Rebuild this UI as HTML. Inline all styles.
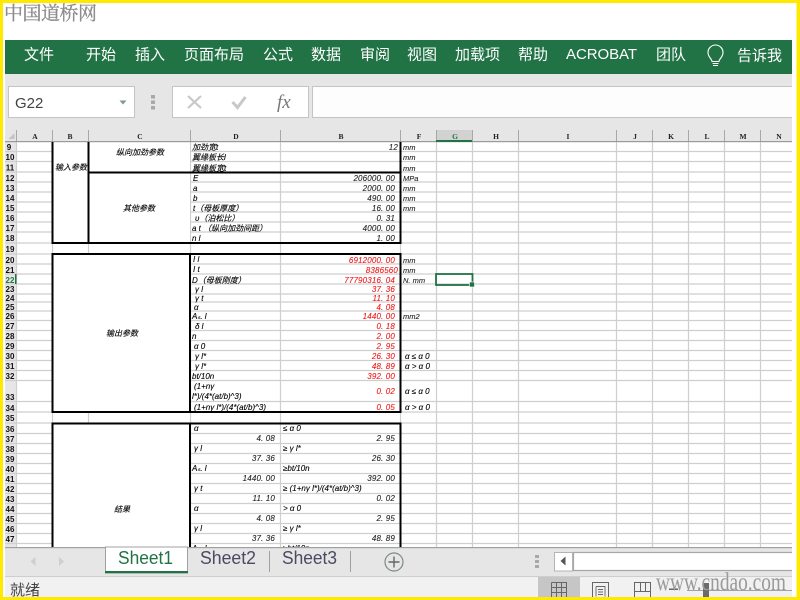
<!DOCTYPE html>
<html lang="zh"><head><meta charset="utf-8"><title>Sheet</title>
<style>
html,body{margin:0;padding:0;width:800px;height:600px;overflow:hidden;background:#fff}
svg{display:block;position:absolute;left:0;top:0}
text{font-family:"Liberation Sans","Noto Sans CJK SC",sans-serif}
.r{font-size:15px;fill:#fff;font-family:"Liberation Sans","Noto Sans CJK SC",sans-serif}
.t{font-size:8px;font-style:italic;fill:#000;stroke:#000;stroke-width:.12px;font-family:"Liberation Sans","Noto Sans CJK SC",sans-serif}
.v{font-size:8px;font-style:italic;fill:#222;stroke:#222;stroke-width:.1px;text-anchor:end;letter-spacing:.15px}
.o{fill:#f01818;stroke:#f01818}
.n{font-size:8px;font-weight:bold;fill:#111;text-anchor:middle;font-family:"Liberation Sans",sans-serif}
.c{font-size:7.5px;font-weight:bold;fill:#222;text-anchor:middle;font-family:"Liberation Serif",serif}
.u{font-size:7.5px;font-style:italic;fill:#222;stroke:#222;stroke-width:.1px}
.b{filter:blur(.3px)}
</style></head><body>
<svg width="800" height="600" viewBox="0 0 800 600">
<rect width="800" height="600" fill="#fff"/>
<!-- logo -->
<text x="4" y="19.500" style="font-family:'Noto Serif CJK SC',serif;font-size:19px;fill:#8c8c8c;stroke:#8c8c8c;stroke-width:.3px;filter:blur(.3px)" textLength="93" lengthAdjust="spacing">中国道桥网</text>
<!-- ribbon -->
<rect x="5" y="40" width="787" height="34" fill="#217346"/>
<g class="r">
<text class="r" x="24" y="59.500">文件</text><text class="r" x="86" y="59.500">开始</text><text class="r" x="135" y="59.500">插入</text>
<text class="r" x="184" y="59.500">页面布局</text><text class="r" x="263" y="59.500">公式</text><text class="r" x="311" y="59.500">数据</text>
<text class="r" x="360" y="59.500">审阅</text><text class="r" x="407" y="59.500">视图</text><text class="r" x="455" y="59.500">加载项</text>
<text class="r" x="518" y="59.500">帮助</text><text class="r" x="566" y="59" textLength="71">ACROBAT</text><text class="r" x="656" y="59.500">团队</text>
<text class="r" x="737" y="60.500">告诉我</text></g>
<path d="M712 61.500c0-3-4-4-4-9a7.500 7.500 0 0 1 15 0c0 5-4 6-4 9zM712.500 63.500h6M713 65.500h5" fill="none" stroke="#fff" stroke-width="1.100"/>
<!-- formula band -->
<rect x="5" y="74" width="787" height="68" fill="#e6e6e6"/>
<rect x="8.500" y="86.500" width="126" height="31" fill="#fff" stroke="#c4c4c4"/>
<text x="15" y="108" style="font-size:15px;fill:#444">G22</text>
<path d="M119.500 100.500h7l-3.500 4z" fill="#7f9a8c"/>
<rect x="151" y="95" width="4" height="3.500" fill="#a8a8a8"/><rect x="151" y="100.500" width="4" height="3.500" fill="#a8a8a8"/><rect x="151" y="106" width="4" height="3.500" fill="#a8a8a8"/>
<rect x="172.500" y="86.500" width="136" height="31" fill="#fff" stroke="#c4c4c4"/>
<path d="M188 96l13 12M201 96l-13 12" stroke="#c8c8c8" stroke-width="2.200" fill="none"/>
<path d="M232.500 102l5 5.500 8-10.500" stroke="#c8c8c8" stroke-width="3" fill="none"/>
<text x="277" y="108" style="font-family:'Liberation Serif',serif;font-style:italic;font-size:19px;fill:#777">fx</text>
<rect x="312.500" y="86.500" width="484" height="31" fill="#fdfdfd" stroke="#c4c4c4"/>
<!-- grid background -->
<rect x="16" y="142" width="776" height="406" fill="#fff"/>
<rect x="5" y="142" width="11" height="406" fill="#e6e6e6"/>
<rect x="436" y="130" width="36" height="11" fill="#d2d2d2"/>
<!-- grid -->
<g stroke="#cfcfcf" stroke-width="1.200">
<path d="M16.500 142V548M52.500 142V548M88.500 142V548M190.500 142V548M280.500 142V548M400.500 142V548M436.500 142V548M472.500 142V548M518.500 142V548M616.500 142V548M652.500 142V548M688.500 142V548M724.500 142V548M760.500 142V548"/>
<path d="M5 151.500H792M5 161.500H792M5 172H792M5 182H792M5 192H792M5 202H792M5 212H792M5 222H792M5 232H792M5 243H792M5 254H792M5 264H792M5 274H792M5 284H792M5 294H792M5 302H792M5 311H792M5 320.500H792M5 330.500H792M5 340.500H792M5 350.500H792M5 360.500H792M5 370.500H792M5 380.500H792M5 401.500H792M5 412H792M5 423H792M5 433.500H792M5 443.500H792M5 453.500H792M5 463.500H792M5 473.500H792M5 483.500H792M5 493.500H792M5 503.500H792M5 513.500H792M5 523.500H792M5 533.500H792M5 543.500H792"/>
</g>
<!-- white merges -->
<rect x="53" y="142" width="35" height="100" fill="#fff"/>
<rect x="89" y="142" width="101" height="30" fill="#fff"/>
<rect x="89" y="173" width="101" height="69" fill="#fff"/>
<rect x="53" y="254" width="137" height="158" fill="#fff"/>
<rect x="53" y="424" width="137" height="124" fill="#fff"/>
<!-- column header -->
<g stroke="#a8a8a8"><path d="M16.500 130V141M52.500 130V141M88.500 130V141M190.500 130V141M280.500 130V141M400.500 130V141M436.500 130V141M472.500 130V141M518.500 130V141M616.500 130V141M652.500 130V141M688.500 130V141M724.500 130V141M760.500 130V141"/></g>
<rect x="5" y="141" width="787" height="1.200" fill="#9a9a9a"/>
<rect x="436" y="140" width="36" height="2" fill="#217346"/>
<path d="M14.500 133v6h-6z" fill="#c4c4c4"/>
<rect x="15" y="274" width="1.500" height="10" fill="#217346"/>
<g class="b">
<text class="c" x="35" y="139">A</text><text class="c" x="70" y="139">B</text><text class="c" x="140" y="139">C</text><text class="c" x="236" y="139">D</text><text class="c" x="341" y="139">B</text><text class="c" x="419" y="139">F</text><text class="c" x="455" y="139" style="fill:#217346">G</text><text class="c" x="496" y="139">H</text><text class="c" x="568" y="139">I</text><text class="c" x="635" y="139">J</text><text class="c" x="671" y="139">K</text><text class="c" x="707" y="139">L</text><text class="c" x="743" y="139">M</text><text class="c" x="779" y="139">N</text>
<!-- row numbers -->
<text class="n" x="9" y="150">9</text><text class="n" x="10" y="160">10</text><text class="n" x="10" y="170.500">11</text><text class="n" x="10" y="181">12</text><text class="n" x="10" y="191">13</text><text class="n" x="10" y="201">14</text><text class="n" x="10" y="211">15</text><text class="n" x="10" y="221">16</text><text class="n" x="10" y="231">17</text><text class="n" x="10" y="241">18</text><text class="n" x="10" y="252">19</text><text class="n" x="10" y="263">20</text><text class="n" x="10" y="273">21</text><text class="n" x="10" y="283" style="fill:#217346">22</text><text class="n" x="10" y="292">23</text><text class="n" x="10" y="301">24</text><text class="n" x="10" y="310">25</text><text class="n" x="10" y="319">26</text><text class="n" x="10" y="329">27</text><text class="n" x="10" y="339">28</text><text class="n" x="10" y="349">29</text><text class="n" x="10" y="359">30</text><text class="n" x="10" y="369">31</text><text class="n" x="10" y="379">32</text><text class="n" x="10" y="400">33</text><text class="n" x="10" y="411">34</text><text class="n" x="10" y="421">35</text><text class="n" x="10" y="432">36</text><text class="n" x="10" y="442">37</text><text class="n" x="10" y="452">38</text><text class="n" x="10" y="462">39</text><text class="n" x="10" y="472">40</text><text class="n" x="10" y="482">41</text><text class="n" x="10" y="492">42</text><text class="n" x="10" y="502">43</text><text class="n" x="10" y="512">44</text><text class="n" x="10" y="522">45</text><text class="n" x="10" y="532">46</text><text class="n" x="10" y="542">47</text>
<!-- labels -->
<text class="t" x="55" y="170">输入参数</text><text class="t" x="116" y="155">纵向加劲参数</text><text class="t" x="123" y="211">其他参数</text>
<text class="t" x="106" y="336">输出参数</text><text class="t" x="114" y="512">结果</text>
<!-- block 1 -->
<text class="t" x="192" y="150">加劲宽t</text><text class="t" x="192" y="160">翼缘板长l</text><text class="t" x="192" y="171">翼缘板宽t</text>
<text class="t" x="193" y="181">E</text><text class="t" x="193" y="191">a</text><text class="t" x="193" y="201">b</text><text class="t" x="193" y="211">t（母板厚度）</text><text class="t" x="195" y="221">υ（泊松比）</text><text class="t" x="192" y="231">a t （纵向加劲间距）</text><text class="t" x="192" y="241">n l</text>
<text class="v" x="398" y="150">12</text>
<text class="v" x="395" y="181">206000. 00</text><text class="v" x="395" y="191">2000. 00</text><text class="v" x="395" y="201">490. 00</text><text class="v" x="395" y="211">16. 00</text><text class="v" x="395" y="221">0. 31</text><text class="v" x="395" y="231">4000. 00</text><text class="v" x="395" y="241">1. 00</text>
<text class="u" x="403" y="150">mm</text><text class="u" x="403" y="160">mm</text><text class="u" x="403" y="171">mm</text><text class="u" x="403" y="181">MPa</text><text class="u" x="403" y="191">mm</text><text class="u" x="403" y="201">mm</text><text class="u" x="403" y="211">mm</text>
<!-- block 2 -->
<text class="t" x="193" y="262">I l</text><text class="t" x="193" y="272">I t</text><text class="t" x="192" y="283">D（母板刚度）</text><text class="t" x="195" y="292">γ l</text><text class="t" x="195" y="301">γ t</text><text class="t" x="194" y="310">α</text><text class="t" x="192" y="319">Aₛ. l</text><text class="t" x="195" y="329">δ l</text><text class="t" x="192" y="339">n</text><text class="t" x="194" y="349">α 0</text><text class="t" x="195" y="359">γ l*</text><text class="t" x="195" y="369">γ l*</text><text class="t" x="192" y="379">bt/10n</text><text class="t" x="194" y="389">(1+nγ</text><text class="t" x="192" y="399">l*)/(4*(at/b)^3)</text><text class="t" x="194" y="410">(1+nγ l*)/(4*(at/b)^3)</text>
<text class="v o" x="395" y="263">6912000. 00</text><text class="v o" x="398" y="273">8386560</text><text class="v o" x="395" y="283">77790316. 04</text><text class="v o" x="395" y="292">37. 36</text><text class="v o" x="395" y="301">11. 10</text><text class="v o" x="395" y="310">4. 08</text><text class="v o" x="395" y="319">1440. 00</text><text class="v o" x="395" y="329">0. 18</text><text class="v o" x="395" y="339">2. 00</text><text class="v o" x="395" y="349">2. 95</text><text class="v o" x="395" y="359">26. 30</text><text class="v o" x="395" y="369">48. 89</text><text class="v o" x="395" y="379">392. 00</text><text class="v o" x="395" y="394">0. 02</text><text class="v o" x="395" y="410">0. 05</text>
<text class="u" x="403" y="263">mm</text><text class="u" x="403" y="273">mm</text><text class="u" x="403" y="283">N. mm</text><text class="u" x="403" y="319">mm2</text>
<text class="t" x="405" y="359">α ≤ α 0</text><text class="t" x="405" y="369">α &gt; α 0</text><text class="t" x="405" y="394">α ≤ α 0</text><text class="t" x="405" y="410">α &gt; α 0</text>
<!-- block 3 -->
<text class="t" x="194" y="431">α</text><text class="t" x="283" y="431">≤ α 0</text><text class="v" x="275" y="441">4. 08</text><text class="v" x="395" y="441">2. 95</text>
<text class="t" x="194" y="451">γ l</text><text class="t" x="283" y="451">≥ γ l*</text><text class="v" x="275" y="461">37. 36</text><text class="v" x="395" y="461">26. 30</text>
<text class="t" x="192" y="471">Aₛ. l</text><text class="t" x="283" y="471">≥bt/10n</text><text class="v" x="275" y="481">1440. 00</text><text class="v" x="395" y="481">392. 00</text>
<text class="t" x="194" y="491">γ t</text><text class="t" x="283" y="491">≥ (1+nγ l*)/(4*(at/b)^3)</text><text class="v" x="275" y="501">11. 10</text><text class="v" x="395" y="501">0. 02</text>
<text class="t" x="194" y="511">α</text><text class="t" x="283" y="511">&gt; α 0</text><text class="v" x="275" y="521">4. 08</text><text class="v" x="395" y="521">2. 95</text>
<text class="t" x="194" y="531">γ l</text><text class="t" x="283" y="531">≥ γ l*</text><text class="v" x="275" y="541">37. 36</text><text class="v" x="395" y="541">48. 89</text>
<text class="t" x="192" y="551">Aₛ. l</text><text class="t" x="283" y="551">≥bt/10n</text>
</g>
<!-- thick borders -->
<g fill="none" stroke="#000" stroke-width="2">
<path d="M52.500 142V243H400.500V142M88.500 142V243M88.500 172.500H400.500"/>
<rect x="52.500" y="254" width="348" height="158"/><path d="M190 254V412"/>
<path d="M52.500 548V423.500H400.500V548M190 423.500V548"/>
</g>
<!-- selection -->
<rect x="436" y="274" width="36.500" height="11" fill="none" stroke="#217346" stroke-width="1.800"/>
<rect x="469.500" y="282" width="5" height="5" fill="#217346" stroke="#fff" stroke-width=".6"/>
<!-- tab bar -->
<rect x="5" y="547" width="787" height="29" fill="#e6e6e6"/>
<rect x="5" y="547" width="787" height="1.200" fill="#a0a0a0"/>
<rect x="105.500" y="547" width="82" height="26" fill="#fff" stroke="#a0a0a0"/>
<rect x="105" y="571" width="83" height="2.200" fill="#217346"/>
<path d="M35.500 557v9l-5-4.500zM59 557v9l5-4.500z" fill="#cfcfcf"/>
<text x="118" y="564" style="font-size:18px;fill:#217346" textLength="55" lengthAdjust="spacingAndGlyphs">Sheet1</text>
<text x="200" y="564" style="font-size:18px;fill:#4a4a62" textLength="56" lengthAdjust="spacingAndGlyphs">Sheet2</text>
<text x="282" y="564" style="font-size:18px;fill:#4a4a62" textLength="55" lengthAdjust="spacingAndGlyphs">Sheet3</text>
<path d="M269.500 551V572M350.500 551V572" stroke="#a0a0a0"/>
<circle cx="394" cy="562" r="9" fill="none" stroke="#7d8a84" stroke-width="1.200"/>
<path d="M394 556.500v11M388.500 562h11" stroke="#666" stroke-width="1.400"/>
<rect x="535" y="555" width="4" height="3" fill="#a8a8a8"/><rect x="535" y="560" width="4" height="3" fill="#a8a8a8"/><rect x="535" y="565" width="4" height="3" fill="#a8a8a8"/>
<rect x="554.500" y="552.500" width="18" height="18.500" fill="#fff" stroke="#b4b4b4"/>
<path d="M565.500 556.500v9l-5-4.500z" fill="#555"/>
<path d="M792 552.500H573.500V570.500H792" fill="#fff" stroke="#a8a8a8" stroke-width="1.200"/>
<!-- status bar -->
<rect x="5" y="576" width="787" height="21" fill="#f1f1f1"/>
<rect x="5" y="576" width="787" height=".8" fill="#c6c6c6"/>
<text x="10" y="595" style="font-size:15px;fill:#444">就绪</text>
<rect x="538" y="577" width="42" height="20" fill="#c6c6c6"/>
<path d="M551.500 582.500h15v15M551.500 582.500v15M551.500 587.500h15M551.500 592.500h15M556.500 582.500v15M561.500 582.500v15" fill="none" stroke="#666"/>
<path d="M592.500 597V582.500h16V597" fill="none" stroke="#666"/>
<path d="M596 586.500h9v10M596 586.500v10M598 589.500h5M598 592h5M598 594.500h5" fill="none" stroke="#666" stroke-width=".9"/>
<path d="M634.500 597V582.500h16V597M634.500 591.500h16M640.500 582.500v9M645.500 582.500v9" fill="none" stroke="#666"/>
<rect x="669" y="588.500" width="9" height="1.500" fill="#666"/>
<rect x="687" y="590" width="105" height=".9" fill="#9a9a9a"/>
<rect x="703" y="583" width="6" height="14" fill="#6a6a6a"/>
<!-- watermark -->
<text x="656" y="590" style="font-family:'Liberation Serif',serif;font-size:25px;fill:#9a9a9a" textLength="130" lengthAdjust="spacingAndGlyphs">www.cndao.com</text>
<!-- right margin and yellow frame -->
<rect x="792" y="0" width="5" height="597" fill="#fff"/>
<rect x="0" y="0" width="800" height="3" fill="#ffe900"/>
<rect x="0" y="597" width="800" height="3" fill="#ffe900"/>
<rect x="0" y="0" width="3" height="600" fill="#ffe900"/>
<rect x="796.500" y="0" width="3.500" height="600" fill="#ffe900"/>
</svg>
</body></html>
